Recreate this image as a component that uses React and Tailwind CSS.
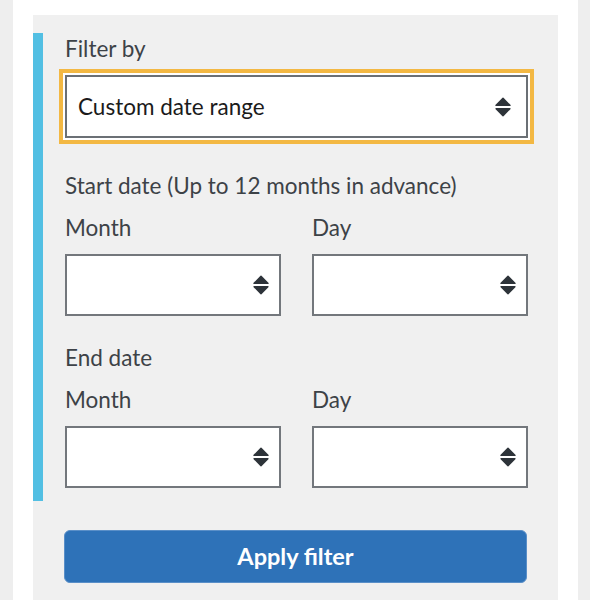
import React from "react";

const FONT = { fontFamily: "Lato, 'Open Sans', sans-serif" };

function Arrows({ className = "" }) {
  return (
    <svg
      className={`pointer-events-none absolute top-1/2 -translate-y-1/2 ${className}`}
      width="16"
      height="20"
      viewBox="0 0 16 20"
      fill="#2d3339">
      <path d="M7 1.2a1.3 1.3 0 0 1 2 0l6.4 6.6c.6.6.2 1.2-.6 1.2H1.2c-.8 0-1.2-.6-.6-1.2z" />
      <path d="M7 18.8a1.3 1.3 0 0 0 2 0l6.4-6.6c.6-.6.2-1.2-.6-1.2H1.2c-.8 0-1.2.6-.6 1.2z" />
    </svg>
  );
}

function DateSelect() {
  return (
    <div className="relative">
      <select
        className="block h-[62px] w-full appearance-none border-2 border-[#73777c] bg-white px-3 text-[22px] text-[#1d1d1d] outline-none"
        style={FONT}
        defaultValue="">
        <option value=""></option>
      </select>
      <Arrows className="right-[12px]" />
    </div>
  );
}

function DateGroup({ title }) {
  return (
    <div>
      <p className="h-8 leading-8 text-[22.5px] text-[#3d4247]">{title}</p>
      <div className="mt-[10px] grid grid-cols-2 gap-[31px]">
        <div>
          <p className="h-8 leading-8 text-[22.5px] text-[#3d4247]">Month</p>
          <div className="mt-[10px]">
            <DateSelect />
          </div>
        </div>
        <div>
          <p className="h-8 leading-8 text-[22.5px] text-[#3d4247]">Day</p>
          <div className="mt-[10px]">
            <DateSelect />
          </div>
        </div>
      </div>
    </div>
  );
}

export default function App() {
  return (
    <div className="h-[600px] overflow-hidden bg-[#eeeeee] pl-[13px] pr-[12px]" style={FONT}>
      <div className="h-full bg-white px-[20px] pt-[15px]">
        <div className="h-full bg-[#f0f0f0] pt-[18px]">
          {/* filter section */}
          <div className="border-l-[10px] border-[#52bfe3] pb-[13px] pl-[22px] pr-[30px]">
            <p className="h-8 leading-8 text-[22.5px] text-[#3d4247]">Filter by</p>
            <div className="relative mt-[10px]">
              <select
                className="block h-[63px] w-full appearance-none border-2 border-[#6b7075] bg-white pl-[11px] text-[22.5px] text-[#1b1b1b] outline-none ring-4 ring-[#f3b843] ring-offset-2 ring-offset-white"
                style={FONT}
                defaultValue="custom">
                <option value="custom">Custom date range</option>
              </select>
              <Arrows className="right-[17px]" />
            </div>

            <div className="mt-[32px]">
              <DateGroup title="Start date (Up to 12 months in advance)" />
            </div>
            <div className="mt-[26px]">
              <DateGroup title="End date" />
            </div>
          </div>

          <div className="pl-[31px] pr-[31px] pt-[29px]">
            <button className="h-[53px] w-full rounded-[6px] border border-[#5a8fc8] bg-[#2e72b8] text-[23.5px] font-bold text-white">
              Apply filter
            </button>
          </div>
        </div>
      </div>
    </div>
  );
}
